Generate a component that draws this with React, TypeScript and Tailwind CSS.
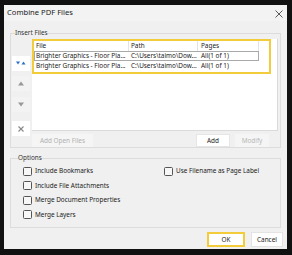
import { FC, ReactNode } from "react"

const files = [
  { file: "Brighter Graphics - Floor Pla...", path: "C:\\Users\\taimo\\Dow...", pages: "All(1 of 1)" },
  { file: "Brighter Graphics - Floor Pla...", path: "C:\\Users\\taimo\\Dow...", pages: "All(1 of 1)" },
]

const SideButton: FC<{ children: ReactNode; white?: boolean; className?: string }> = ({ children, white, className }) => (
  <div className={`w-[18px] h-[15px] shrink-0 flex items-center justify-center ${white ? "bg-white" : "bg-[#f3f3f3]"} ${className ?? ""}`}>
    {children}
  </div>
)

const Check: FC<{ label: string }> = ({ label }) => (
  <div className="flex items-center gap-[3px] h-[14.5px]">
    <div className="w-[9px] h-[9px] border border-[#555] rounded-[1.5px] bg-[#f7f7f7]" />
    <span>{label}</span>
  </div>
)

export default function App() {
  return (
    <div className="w-[292px] h-[255px] bg-[#111] pt-[5px] pl-[4px] text-[6.4px] text-[#1a1a1a]" style={{ fontFamily: '"Noto Sans", "Open Sans", sans-serif' }}>
      <div className="w-[283px] h-[244px] bg-[#f0f0f0] flex flex-col">

        <div className="h-[16px] flex items-center justify-between pl-[3px] pr-[4px] bg-[#f3f3f3]">
          <span className="text-[7.6px] text-[#222]">Combine PDF Files</span>
          <svg width="8" height="8" viewBox="0 0 8 8" className="mt-[1px]">
            <path d="M0.5 0.5 L7.5 7.5 M7.5 0.5 L0.5 7.5" stroke="#333" strokeWidth="0.8" />
          </svg>
        </div>

        <div className="px-[6px] pt-[8px]">
          <fieldset className="border border-[#dcdcdc] w-[271px] h-[119px] px-[1px]">
            <legend className="ml-[3px] leading-[8px] text-[#333]">Insert Files</legend>

            <div className="flex items-start h-[92px] mt-[2px]">
              <div className="flex flex-col pt-[17px] w-[20px] shrink-0">
                <SideButton white>
                  <svg width="10" height="5" viewBox="0 0 10 5">
                    <path d="M0 0.5 H4 L2 3.5 Z" fill="#2a6fc9" />
                    <path d="M5.5 3.5 H9.5 L7.5 0.5 Z" fill="#2a6fc9" />
                  </svg>
                </SideButton>
                <SideButton className="mt-[5px]">
                  <svg width="6" height="5" viewBox="0 0 6 5"><path d="M0 4.5 H6 L3 0.5 Z" fill="#999" /></svg>
                </SideButton>
                <SideButton className="mt-[6px]">
                  <svg width="6" height="5" viewBox="0 0 6 5"><path d="M0 0.5 H6 L3 4.5 Z" fill="#999" /></svg>
                </SideButton>
                <SideButton white className="mt-[9px]">
                  <svg width="6" height="6" viewBox="0 0 6 6">
                    <path d="M0.5 0.5 L5.5 5.5 M5.5 0.5 L0.5 5.5" stroke="#888" strokeWidth="1.1" />
                  </svg>
                </SideButton>
              </div>

              <div className="w-[246px] h-[92px] bg-white border-r border-b border-[#dadada]">
                <div className="w-[239px] border-2 border-[#f2cc3a] pb-[1px]">
                  <div className="flex h-[10px] items-center text-[#222]">
                    <div className="w-[95px] pl-[2px] border-r border-[#e3e3e3] h-full flex items-center">File</div>
                    <div className="w-[69px] pl-[2px] border-r border-[#e3e3e3] h-full flex items-center">Path</div>
                    <div className="w-[61px] pl-[3px] border-r border-[#e3e3e3] h-full flex items-center">Pages</div>
                  </div>
                  {files.map((f, i) => (
                    <div
                      key={i}
                      className={`flex h-[10px] items-center w-[225px] ${i === 0 ? "border border-[#a9a9a9]" : "border border-transparent"}`}
                    >
                      <div className="w-[95px] pl-[1px] whitespace-nowrap overflow-hidden">{f.file}</div>
                      <div className="w-[69px] pl-[1px] whitespace-nowrap overflow-hidden">{f.path}</div>
                      <div className="w-[59px] pl-[2px] whitespace-nowrap overflow-hidden">{f.pages}</div>
                    </div>
                  ))}
                </div>
              </div>
            </div>

            <div className="flex items-center mt-[3px] pl-[20px] pr-[10px]">
              <div className="w-[61px] h-[13px] bg-[#f5f5f5] text-[#b0b0b0] flex items-center justify-center">Add Open Files</div>
              <div className="flex-1" />
              <div className="w-[34px] h-[13px] bg-white border border-[#e6e6e6] text-[#222] flex items-center justify-center">Add</div>
              <div className="w-[34px] h-[13px] ml-[5px] bg-[#f5f5f5] text-[#b8b8b8] flex items-center justify-center">Modify</div>
            </div>
          </fieldset>

          <fieldset className="border border-[#dcdcdc] w-[271px] h-[74px] mt-[6px] px-[1px]">
            <legend className="ml-[6px] leading-[8px] text-[#333]">Options</legend>
            <div className="flex pl-[11px] pt-[2px]">
              <div className="flex flex-col w-[141px]">
                <Check label="Include Bookmarks" />
                <Check label="Include File Attachments" />
                <Check label="Merge Document Properties" />
                <Check label="Merge Layers" />
              </div>
              <div className="flex flex-col">
                <Check label="Use Filename as Page Label" />
              </div>
            </div>
          </fieldset>

          <div className="flex justify-end gap-[6px] mt-[4px]">
            <div className="w-[38px] h-[15px] border-2 border-[#f2cc3a] bg-white flex items-center justify-center text-[#222]">OK</div>
            <div className="w-[32px] h-[15px] bg-white border border-[#e3e3e3] flex items-center justify-center text-[#222] -mr-[2px]">Cancel</div>
          </div>
        </div>

      </div>
    </div>
  )
}
